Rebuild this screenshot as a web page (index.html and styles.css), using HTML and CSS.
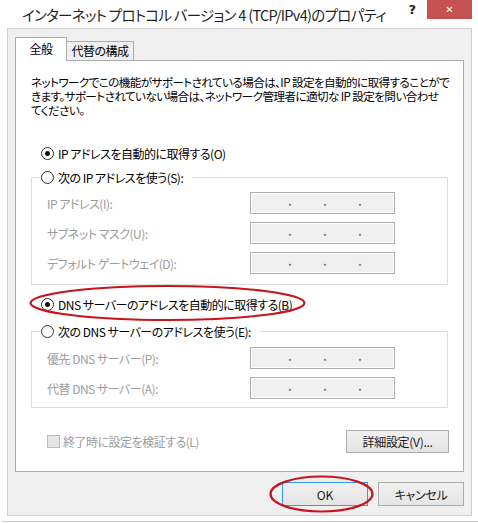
FILE: index.html
```html
<!DOCTYPE html>
<html lang="ja">
<head>
<meta charset="utf-8">
<title>インターネット プロトコル バージョン 4 (TCP/IPv4)のプロパティ</title>
<link rel="stylesheet" href="styles.css">
</head>
<body>
<div class="window">
  <div class="titlebar">
    <span class="title">インターネット プロトコル バージョン 4 (TCP/IPv4)のプロパティ</span>
    <span class="help">?</span>
    <span class="close">&#x2715;</span>
  </div>

  <div class="dialog">
    <div class="tabs">
      <div class="tab active">全般</div>
      <div class="tab">代替の構成</div>
    </div>

    <div class="panel">
      <p class="intro">ネットワークでこの機能がサポートされている場合は、IP 設定を自動的に取得することがで<br>きます。サポートされていない場合は、ネットワーク管理者に適切な IP 設定を問い合わせ<br>てください。</p>

      <label class="option first"><span class="radio checked"></span>IP アドレスを自動的に取得する(O)</label>

      <fieldset class="group group-ip">
        <legend><label class="option"><span class="radio"></span>次の IP アドレスを使う(S):</label></legend>
        <div class="field"><span class="field-label">IP アドレス(I):</span><div class="ipbox"><span>.</span><span>.</span><span>.</span></div></div>
        <div class="field"><span class="field-label">サブネット マスク(U):</span><div class="ipbox"><span>.</span><span>.</span><span>.</span></div></div>
        <div class="field"><span class="field-label">デフォルト ゲートウェイ(D):</span><div class="ipbox"><span>.</span><span>.</span><span>.</span></div></div>
      </fieldset>

      <label class="option dns-auto"><span class="radio checked"></span>DNS サーバーのアドレスを自動的に取得する(B)</label>

      <fieldset class="group group-dns">
        <legend><label class="option"><span class="radio"></span>次の DNS サーバーのアドレスを使う(E):</label></legend>
        <div class="field"><span class="field-label">優先 DNS サーバー(P):</span><div class="ipbox"><span>.</span><span>.</span><span>.</span></div></div>
        <div class="field"><span class="field-label">代替 DNS サーバー(A):</span><div class="ipbox"><span>.</span><span>.</span><span>.</span></div></div>
      </fieldset>

      <div class="panel-foot">
        <label class="check"><span class="box"></span>終了時に設定を検証する(L)</label>
        <button class="btn advanced">詳細設定(V)...</button>
      </div>
    </div>

    <div class="actions">
      <button class="btn default">OK</button>
      <button class="btn">キャンセル</button>
    </div>
  </div>

  <svg class="marks" width="478" height="523" viewBox="0 0 478 523">
    <ellipse cx="167.5" cy="303" rx="137" ry="17" />
    <ellipse cx="321.5" cy="494" rx="51" ry="17.5" />
  </svg>
</div>
</body>
</html>
```

FILE: styles.css
```css
* {
    box-sizing: border-box;
}

body {
    margin: 0;
    background: #fff;
    font-family: "Noto Sans CJK JP", "Noto Sans", sans-serif;
    font-size: 12px;
    font-feature-settings: "palt" 1;
    letter-spacing: -0.5px;
    color: #000;
}

.window {
    position: relative;
    width: 478px;
    height: 523px;
    overflow: hidden;
}

/* title bar */
.titlebar {
    display: flex;
    align-items: flex-start;
    height: 28px;
}
.title {
    flex: 1;
    min-width: 0;
    padding-left: 22px;
    line-height: 29px;
    font-size: 14.5px;
    letter-spacing: -0.7px;
    color: #1e1e1e;
    white-space: nowrap;
    overflow: hidden;
}
.help {
    margin: 2px 11px 0 0;
    font-family: "DejaVu Sans", sans-serif;
    font-weight: bold;
    font-size: 13px;
    line-height: 16px;
    letter-spacing: 0;
    color: #222;
}
.close {
    flex: none;
    width: 45px;
    height: 19px;
    margin-right: 6px;
    background: #c75050;
    color: #fff;
    text-align: center;
    font-family: "DejaVu Sans", sans-serif;
    font-weight: bold;
    font-size: 10px;
    line-height: 19px;
    letter-spacing: 0;
}

/* dialog body */
.dialog {
    width: 465px;
    height: 488px;
    margin-left: 7px;
    padding: 8px 7px 0 7px;
    background: #f0f0f0;
    border: 1px solid #d0d0d0;
}

.tabs {
    display: flex;
    align-items: flex-end;
    height: 24px;
    margin-bottom: -1px;
}
.tab {
    position: relative;
    width: 68px;
    height: 20px;
    margin-left: -1px;
    border: 1px solid #acacac;
    background: #f0f0f0;
    text-align: center;
    line-height: 18px;
}
.tab.active {
    z-index: 1;
    width: 52px;
    height: 24px;
    margin-left: 0;
    border-bottom: none;
    background: #fff;
    line-height: 22px;
}

.panel {
    height: 412px;
    padding: 0 14px 0 0;
    background: #fff;
    border: 1px solid #acacac;
}

.intro {
    margin: 14px 0 0 15px;
    font-size: 11.6px;
    letter-spacing: -0.6px;
    line-height: 14px;
    white-space: nowrap;
}

.option {
    display: flex;
    align-items: center;
    height: 20px;
    white-space: nowrap;
}
.option.first {
    margin: 26px 0 0 25px;
}
.option.dns-auto {
    margin: 9px 0 0 25px;
}

.radio {
    position: relative;
    flex: none;
    width: 13px;
    height: 13px;
    margin-right: 4px;
    border: 1px solid #333;
    border-radius: 50%;
    background: #fff;
}
.radio.checked::after {
    content: "";
    position: absolute;
    left: 3px;
    top: 3px;
    width: 5px;
    height: 5px;
    border-radius: 50%;
    background: #111;
}

.group {
    width: 417px;
    margin: 4px 0 0 15px;
    padding: 5px 0 10px 9px;
    border: 1px solid #dcdcdc;
}
.group legend {
    padding: 0 9px 0 0;
    margin-left: 0;
}
.group-dns {
    margin-top: 7px;
    padding-top: 6px;
    padding-bottom: 8px;
}

.field {
    display: flex;
    align-items: center;
    height: 22px;
    margin-left: 6px;
    color: #9c9c9c;
}
.field + .field {
    margin-top: 8px;
}
.field-label {
    width: 203px;
    white-space: nowrap;
}

.ipbox {
    display: flex;
    width: 145px;
    height: 22px;
    padding-left: 37px;
    gap: 31px;
    border: 1px solid #adadad;
    box-shadow: inset 0 0 0 1px #fff;
    background: #f0f0f0;
    color: #7a7a7a;
    line-height: 16px;
    font-weight: bold;
    letter-spacing: 0;
}
.ipbox span {
    width: 4px;
    text-align: center;
}

.panel-foot {
    display: flex;
    align-items: center;
    justify-content: space-between;
    margin: 22px 0 0 31px;
}
.check {
    display: flex;
    align-items: center;
    color: #9c9c9c;
    white-space: nowrap;
}
.check .box {
    width: 13px;
    height: 13px;
    margin-right: 3px;
    border: 1px solid #bcbcbc;
    background: #e6e6e6;
}

.btn {
    height: 23px;
    padding: 0;
    border: 1px solid #acacac;
    background: linear-gradient(#f0f0f0, #e5e5e5);
    font-family: inherit;
    font-size: 12px;
    font-weight: normal;
    font-feature-settings: "palt" 1;
    letter-spacing: -0.3px;
    color: #1a1a1a;
}
.advanced {
    width: 103px;
}

.actions {
    display: flex;
    justify-content: flex-end;
    gap: 10px;
    margin-top: 10px;
}
.actions .btn {
    width: 86px;
    height: 24px;
}
.actions .default {
    border-color: #3399ff;
    letter-spacing: 0;
}

/* red highlight rings drawn over the dialog */
.marks {
    position: absolute;
    left: 0;
    top: 0;
    pointer-events: none;
}
.marks ellipse {
    fill: none;
    stroke: #c8141c;
    stroke-width: 2.2;
}

/* window bottom edge */
.window::after {
    content: "";
    position: absolute;
    left: 2px;
    right: 0;
    top: 521px;
    height: 1px;
    background: #c8c8c8;
}
```
